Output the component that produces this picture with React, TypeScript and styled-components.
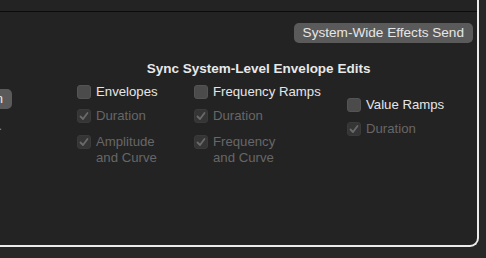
import React from 'react';
import styled, { createGlobalStyle } from 'styled-components';

const GlobalStyle = createGlobalStyle`
  html, body { margin: 0; padding: 0; background: #272727; }
  body { font-family: "Liberation Sans", Arial, sans-serif; -webkit-font-smoothing: antialiased; }
  #root { width: 486px; height: 258px; overflow: hidden; }
`;

const Frame = styled.div`
  display: flex;
  width: 486px;
  height: 258px;
  background: #272727;
  overflow: hidden;
`;

const Panel = styled.div`
  width: 477px;
  height: 245px;
  flex: none;
  background: #232323;
  border-right: 2px solid #ececec;
  border-bottom: 2px solid #ececec;
  border-bottom-right-radius: 9px;
  display: flex;
  flex-direction: column;
`;

const TopBar = styled.div`
  height: 11px;
  flex: none;
  border-bottom: 1px solid #0c0c0c;
`;

const ButtonRow = styled.div`
  display: flex;
  justify-content: flex-end;
  padding: 11px 4px 0 0;
`;

const PillButton = styled.div`
  height: 20px;
  line-height: 20px;
  padding: 0 9px;
  border-radius: 5px;
  background: #5a5a5a;
  color: #e6e6e6;
  font-size: 13.6px;
  white-space: nowrap;
  flex: none;
`;

const Body = styled.div`
  display: flex;
  margin-top: 18px;
`;

const LeftColumn = styled.div`
  width: 12px;
  flex: none;
  display: flex;
  flex-direction: column;
  align-items: flex-end;
  padding-top: 28px;
`;

const LeftNote = styled.div`
  margin-top: 9px;
  margin-right: 10px;
  font-size: 13px;
  line-height: 16px;
  color: #8a8a8a;
  white-space: nowrap;
`;

const Group = styled.div`
  margin-left: 65px;
  display: flex;
  flex-direction: column;
`;

const GroupTitle = styled.div`
  text-align: center;
  font-weight: bold;
  font-size: 13.5px;
  line-height: 16px;
  color: #e8e8e8;
  margin-right: 4px;
`;

const Columns = styled.div`
  margin-top: 7px;
  display: grid;
  grid-template-columns: 117px 153px auto;
`;

const Column = styled.div<{ $offset?: number }>`
  display: flex;
  flex-direction: column;
  gap: 8px;
  padding-top: ${(p) => p.$offset ?? 0}px;
`;

const Row = styled.div<{ $extra?: number }>`
  display: flex;
  align-items: flex-start;
  gap: 5px;
  margin-top: ${(p) => p.$extra ?? 0}px;
`;

const Box = styled.div<{ $disabled?: boolean }>`
  width: 14px;
  height: 14px;
  box-sizing: border-box;
  flex: none;
  margin-top: 1px;
  border-radius: 3px;
  background: ${(p) => (p.$disabled ? '#353535' : '#4b4b4b')};
  border: 1px solid ${(p) => (p.$disabled ? '#3a3a3a' : '#545454')};
  display: flex;
  align-items: center;
  justify-content: center;
`;

const Label = styled.div<{ $disabled?: boolean }>`
  font-size: 13.2px;
  line-height: 16px;
  color: ${(p) => (p.$disabled ? '#676767' : '#e6e6e6')};
  white-space: nowrap;
`;

const Check = () => (
  <svg width="12" height="12" viewBox="0 0 12 12">
    <polyline points="2.5,6.5 5,9 9.5,3" fill="none" stroke="#6a6a6a" strokeWidth="1.8" strokeLinecap="round" strokeLinejoin="round" />
  </svg>
);

const CheckRow = ({ label, disabled, checked, extra }: { label: React.ReactNode; disabled?: boolean; checked?: boolean; extra?: number }) => (
  <Row $extra={extra}>
    <Box $disabled={disabled}>{checked && <Check />}</Box>
    <Label $disabled={disabled}>{label}</Label>
  </Row>
);

export default function App() {
  return (
    <>
      <GlobalStyle />
      <Frame>
        <Panel>
          <TopBar />
          <ButtonRow>
            <PillButton>System-Wide Effects Send</PillButton>
          </ButtonRow>
          <Body>
            <LeftColumn>
              <PillButton>Design</PillButton>
              <LeftNote>Level.</LeftNote>
            </LeftColumn>
            <Group>
              <GroupTitle>Sync System-Level Envelope Edits</GroupTitle>
              <Columns>
                <Column>
                  <CheckRow label="Envelopes" />
                  <CheckRow label="Duration" disabled checked />
                  <CheckRow label={<>Amplitude<br />and Curve</>} disabled checked extra={2} />
                </Column>
                <Column>
                  <CheckRow label="Frequency Ramps" />
                  <CheckRow label="Duration" disabled checked />
                  <CheckRow label={<>Frequency<br />and Curve</>} disabled checked extra={2} />
                </Column>
                <Column $offset={13}>
                  <CheckRow label="Value Ramps" />
                  <CheckRow label="Duration" disabled checked />
                </Column>
              </Columns>
            </Group>
          </Body>
        </Panel>
      </Frame>
    </>
  );
}
